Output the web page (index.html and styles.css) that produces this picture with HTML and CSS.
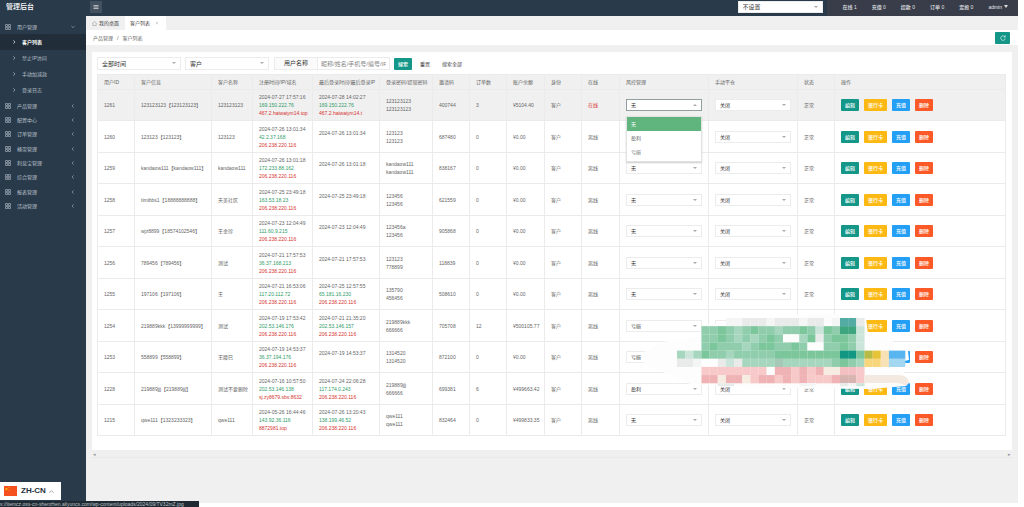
FILE: index.html
```
<!DOCTYPE html>
<html lang="zh-CN">
<head>
<meta charset="utf-8">
<title>管理后台</title>
<link rel="stylesheet" href="styles.css">
</head>
<body>
<svg class="defs" aria-hidden="true">
  <symbol id="grid" viewBox="0 0 12 12"><path d="M1 1h4v4H1zM7 1h4v4H7zM1 7h4v4H1zM7 7h4v4H7z" fill="none" stroke="currentColor" stroke-width="1.2"/></symbol>
  <symbol id="left" viewBox="0 0 12 12"><path d="M8 1 3 6l5 5" fill="none" stroke="currentColor" stroke-width="1.6"/></symbol>
  <symbol id="right" viewBox="0 0 12 12"><path d="m4 1 5 5-5 5" fill="none" stroke="currentColor" stroke-width="2"/></symbol>
  <symbol id="down" viewBox="0 0 12 12"><path d="m1 3 5 5 5-5" fill="none" stroke="currentColor" stroke-width="1.6"/></symbol>
  <symbol id="up" viewBox="0 0 12 12"><path d="m1 9 5-5 5 5" fill="none" stroke="currentColor" stroke-width="1.8"/></symbol>
</svg>
<div class="app">
  <aside class="side">
    <h1 class="brand">管理后台</h1>
    <nav>
      <a class="item first" href="#"><svg class="ico"><use href="#grid"/></svg><span>用户管理</span><svg class="arrow"><use href="#down"/></svg></a>
      <a class="sub active" href="#"><svg class="chev"><use href="#right"/></svg>客户列表</a>
      <a class="sub" href="#"><svg class="chev"><use href="#right"/></svg>禁止IP访问</a>
      <a class="sub" href="#"><svg class="chev"><use href="#right"/></svg>手动加减款</a>
      <a class="sub" href="#"><svg class="chev"><use href="#right"/></svg>登录日志</a>
      <a class="item" href="#"><svg class="ico"><use href="#grid"/></svg><span>产品管理</span><svg class="arrow"><use href="#left"/></svg></a>
      <a class="item" href="#"><svg class="ico"><use href="#grid"/></svg><span>配置中心</span><svg class="arrow"><use href="#left"/></svg></a>
      <a class="item" href="#"><svg class="ico"><use href="#grid"/></svg><span>订单管理</span><svg class="arrow"><use href="#left"/></svg></a>
      <a class="item" href="#"><svg class="ico"><use href="#grid"/></svg><span>桶带管理</span><svg class="arrow"><use href="#left"/></svg></a>
      <a class="item" href="#"><svg class="ico"><use href="#grid"/></svg><span>利息宝管理</span><svg class="arrow"><use href="#left"/></svg></a>
      <a class="item" href="#"><svg class="ico"><use href="#grid"/></svg><span>综合管理</span><svg class="arrow"><use href="#left"/></svg></a>
      <a class="item" href="#"><svg class="ico"><use href="#grid"/></svg><span>报表管理</span><svg class="arrow"><use href="#left"/></svg></a>
      <a class="item" href="#"><svg class="ico"><use href="#grid"/></svg><span>活动管理</span><svg class="arrow"><use href="#left"/></svg></a>
    </nav>
  </aside>
  <div class="main">
    <header class="top">
      <button class="fold" aria-label="收起菜单"><svg viewBox="0 0 12 12"><path d="M1 3h10M1 6h10M1 9h10" fill="none" stroke="currentColor" stroke-width="1.4"/></svg></button>
      <span class="pick head-pick"><select aria-label="提示设置"><option>不设置</option></select></span>
      <nav class="stats">
        <a href="#">在线 1</a><a href="#">充值 0</a><a href="#">提款 0</a><a href="#">订单 0</a><a href="#">定投 0</a><a class="user" href="#">admin</a>
      </nav>
    </header>
    <div class="tabs">
      <a class="tab" href="#"><svg viewBox="0 0 12 12"><path d="M1 6 6 1l5 5M2 5v6h8V5" fill="none" stroke="currentColor"/></svg>我的桌面</a>
      <a class="tab on" href="#">客户列表<svg class="x" viewBox="0 0 12 12"><path d="m2 2 8 8m0-8-8 8" fill="none" stroke="currentColor" stroke-width="1.4"/></svg></a>
    </div>
    <div class="crumbs">
      <span>产品管理</span><span>/</span><span>客户列表</span>
      <button class="reload" aria-label="刷新"><svg viewBox="0 0 12 12"><path d="M10 4A4.500 4.500 0 1 0 10.500 7M10.500 1v3.200H7.500" fill="none" stroke="currentColor" stroke-width="1.200"/></svg></button>
    </div>
    <section class="card">
      <form class="filter">
        <span class="pick wide"><select aria-label="时间"><option>全部时间</option></select></span>
        <span class="pick wide"><select aria-label="身份"><option>客户</option></select></span>
        <span class="field"><label for="name">用户名称</label><input id="name" placeholder="昵称/姓名/手机号/编号/IP"></span>
        <button class="btn teal" type="button">搜索</button>
        <button class="plain" type="button">重置</button>
        <button class="plain" type="button">搜索全部</button>
      </form>
      <div class="table-wrap">
        <table>
          <colgroup><col class="w37"><col class="w77"><col class="w41"><col class="w60"><col class="w67"><col class="w53"><col class="w37"><col class="w37"><col class="w38"><col class="w37"><col class="w38"><col class="w89"><col class="w89"><col class="w37"><col></colgroup>
          <thead><tr><th>用户ID</th><th>客户信息</th><th>客户名称</th><th>注册时间/IP/域名</th><th>最后登录时间/最后登录IP</th><th>登录密码/提现密码</th><th>邀请码</th><th>订单数</th><th>账户余额</th><th>身份</th><th>在线</th><th>风控管理</th><th>手动平仓</th><th>状态</th><th>操作</th></tr></thead>
          <tbody id="rows"></tbody>
        </table>
        <svg class="mosaic" viewBox="640 314 275 80" aria-hidden="true">
          <path d="M644 352 662 342 700 337 703 325 760 318 800 315 842 314 866 317 868 334 893 338 893 350 908 351 909 360 890 364 904 372 909 380 906 386 870 389 760 388 690 384 668 374 644 364Z" fill="#fdfdfd"/>
          <g id="cells"></g>
          <path d="M864 375h34q10 0 11 8l-3 3q-8-4-14-3h-28z" fill="#f3e9e1"/>
        </svg>
      </div>
    </section>
    <div class="scroll"><span>◂</span><span>▸</span></div>
  </div>
</div>
<button class="lang"><svg class="flag" viewBox="0 0 26 20"><path d="M0 0h26v20H0z" fill="#f4511e"/><path d="m5 3 1 2h2L6.500 6.500 7 9 5 7.500 3 9l.5-2.500L2 5h2z" fill="#ffc107"/><circle cx="10" cy="3" r="1" fill="#ffc107"/><circle cx="10" cy="8" r="1" fill="#ffc107"/></svg>ZH-CN<svg class="tri"><use href="#up"/></svg></button>
<div class="status">s://itemcz.oss-cn-shenzhen.aliyuncs.com/wp-content/uploads/2024/09/TV32mZ.jpg</div>
<script src="app.js"></script>
</body>
</html>
```
FILE: styles.css
```
* { box-sizing: border-box; }
body {
  margin: 0;
  padding: 0 6px 4px 0;
  min-height: 100vh;
  display: flex;
  background: #fff;
  color: #666;
  font: 5px/8px "Liberation Sans", "Noto Sans CJK SC", sans-serif;
}
a { color: inherit; text-decoration: none; }
button, input, select { font: inherit; color: inherit; margin: 0; border: 0; padding: 0; border-radius: 0; background: none; }
svg { display: block; }
.defs { position: absolute; width: 0; height: 0; }
.app { flex: 1; display: flex; background: #f0f0f0; }

.side { width: 86px; flex: none; background: #293a4b; color: #b9c1c9; }
.brand { margin: 0; padding: 0 6px; height: 19px; font-size: 7px; line-height: 13px; font-weight: 500; color: #fff; }
.item, .sub { display: flex; align-items: center; }
.item { height: 14px; padding: 0 11px 0 5px; gap: 6px; }
.item.first { height: 15px; }
.item:nth-child(3n) { height: 15px; }
.item span { flex: 1; }
.ico { width: 6px; height: 6px; }
.arrow { width: 4px; height: 4px; }
.sub { height: 16px; padding-left: 12px; gap: 6px; }
.chev { width: 4px; height: 4px; }
.sub.active { background: #212d38; color: #fff; font-weight: 700; }

.main { flex: 1; min-width: 0; }
.top { height: 16px; display: flex; align-items: center; background: #293a4b; color: #e4e6ea; }
.fold { width: 12px; height: 12px; margin: 0 auto 2px 4px; background: #42505f; display: flex; align-items: center; justify-content: center; }
.fold svg { width: 6px; height: 6px; }
.stats { height: 16px; display: flex; align-items: center; gap: 15px; margin-left: 4px; padding: 0 10px 3px 16px; background: #393d49; font-weight: 500; }
.user { display: flex; align-items: center; gap: 2px; }
.user::after { content: ""; border: 2px solid transparent; border-top: 3px solid #ddd; border-bottom: 0; }

.pick { position: relative; display: block; height: 12px; background: #fff; border: 1px solid #ececec; color: #333; }
.pick select { width: 100%; height: 100%; padding: 0 4px; appearance: none; outline: 0; display: block; }
.pick::after { content: ""; position: absolute; right: 4px; top: 4px; border: 2px solid transparent; border-top-color: #aaa; border-bottom: 0; pointer-events: none; }
.pick.open { border-color: #8fa09d; }
.pick.open::after { border: 2px solid transparent; border-bottom-color: #aaa; border-top: 0; }
.head-pick { width: 85px; margin-bottom: 2px; font-size: 6px; }
.wide { width: 84px; height: 13px; font-size: 6px; }

.tabs { height: 14px; display: flex; background: #f0f0f0; color: #444; }
.tab { display: flex; align-items: center; gap: 2px; padding: 0 6px; }
.tab svg { width: 5px; height: 5px; color: #777; }
.tab.on { background: #fff; gap: 5px; padding: 0 7px 0 5px; }
.tab.on .x { width: 4px; height: 4px; color: #aaa; }
.crumbs { height: 15px; display: flex; align-items: center; gap: 4px; padding: 0 8px 0 7px; background: #fff; }
.reload { margin-left: auto; width: 15px; height: 12px; background: #149688; color: #fff; display: flex; align-items: center; justify-content: center; border-radius: 1px; }
.reload svg { width: 6px; height: 6px; }

.card { margin: 7px 6px 0; padding: 5px 6px 14px 5px; background: #fff; }
.filter { display: flex; align-items: center; gap: 4px; height: 13px; margin-bottom: 4px; }
.field { display: flex; height: 13px; margin-left: 1px; border: 1px solid #ececec; font-size: 6px; color: #333; }
.field label { width: 43px; line-height: 11px; text-align: center; background: #fbfbfb; border-right: 1px solid #ececec; }
.field input { width: 71px; padding: 0 3px; outline: 0; }
.field input::placeholder { color: #888; font-size: 6px; }
.btn { height: 12px; padding: 0 4px; color: #fff; font-weight: 500; border-radius: 1px; white-space: nowrap; }
.teal { background: #149688; }
.amber { background: #fdb913; }
.blue { background: #249ff6; }
.orange { background: #fb5a28; }
.filter .btn { padding: 0 4px; }
.plain { padding: 0 4px; color: #444; }

.table-wrap { position: relative; }
table { width: 100%; table-layout: fixed; border-collapse: collapse; }
.w37 { width: 37px; } .w38 { width: 38px; } .w41 { width: 41px; } .w53 { width: 53px; } .w60 { width: 60px; }
.w67 { width: 67px; } .w77 { width: 77px; } .w89 { width: 89px; }
th, td { padding: 0 6px; border: 1px solid #ebebeb; text-align: left; font-weight: 400; white-space: nowrap; vertical-align: middle; }
th { height: 15px; background: #f0f0f0; }
td { height: 31px; }
tr:nth-child(even) td { height: 32px; }
.hover td { background: #f0f0f0; }
.ip { color: #2f9c68; }
.dom, .live { color: #d6342f; }
.times > div { min-height: 8px; }
.actions { display: flex; gap: 5px; }
.menu { position: absolute; z-index: 2; top: 16px; left: -1px; right: -1px; margin: 0; padding: 0 0 2px; list-style: none; background: #fff; border: 1px solid #e2e2e2; box-shadow: 0 1px 2px #0002; color: #666; }
.menu li { height: 14px; padding: 0 4px; line-height: 14px; }
.menu .sel { background: #5fb57d; color: #fff; }
.mosaic { position: absolute; left: 543px; top: 240px; width: 275px; height: 80px; }
.scroll { display: flex; justify-content: space-between; height: 8px; margin: 0 6px; padding: 0 1px; border-bottom: 1px solid #e9e9e9; color: #999; }

.lang { position: fixed; left: 0; bottom: 7px; height: 18px; width: 61px; padding-left: 4px; display: flex; align-items: center; gap: 4px; background: #fff; color: #26303a; font: 700 8px/18px "Liberation Sans", sans-serif; }
.flag { width: 13px; height: 10px; }
.tri { width: 5px; height: 5px; margin-left: -1px; color: #888; }
.status { position: fixed; left: 0; bottom: 0; width: 199px; height: 6px; background: #202a33; color: #b8c0c6; white-space: nowrap; line-height: 6px; }
```
FILE: app.js
```
const customers = [
  ["1261", "123123123【123123123】", "123123123", "2024-07-27 17:57:16|169.150.222.76|467.2.haiwaiym14.top", "2024-07-28 14:02:27|169.150.222.76|467.2.haiwaiym14.t", "123123123|123123123", "400744", "3", "¥5104.40", "无"],
  ["1260", "123123【123123】", "123123", "2024-07-26 13:01:34|42.2.37.168|206.238.220.116", "2024-07-26 13:01:34|", "123123|123123", "687480", "0", "¥0.00", "无"],
  ["1259", "kandaow111【kandaow111】", "kandaow111", "2024-07-26 13:01:18|172.233.88.162|206.238.220.116", "2024-07-26 13:01:18|", "kandaow111|kandaow111", "838167", "0", "¥0.00", "无"],
  ["1258", "timibbs1【18888888888】", "天美社区", "2024-07-25 23:49:18|163.53.18.23|206.238.220.116", "2024-07-25 23:49:18|", "123456|123456", "621559", "0", "¥0.00", "无"],
  ["1257", "wjz8899【18574102546】", "王金珍", "2024-07-23 12:04:49|111.60.9.215|206.238.220.116", "2024-07-23 12:04:49|", "123456a|123456", "905868", "0", "¥0.00", "无"],
  ["1256", "789456【789456】", "测试", "2024-07-21 17:57:53|36.37.168.213|206.238.220.116", "2024-07-21 17:57:53|", "123123|778899", "118839", "0", "¥0.00", "无"],
  ["1255", "197106【197106】", "王", "2024-07-21 16:53:06|117.20.112.72|206.238.220.116", "2024-07-25 12:57:55|65.181.16.230|206.238.220.116", "135790|456456", "508610", "0", "¥0.00", "无"],
  ["1254", "219889kkk【13999999999】", "测试", "2024-07-19 17:53:42|202.53.146.176|206.238.220.116", "2024-07-21 21:35:20|202.53.146.157|206.238.220.116", "219889kkk|666666", "705708", "12", "¥500105.77", "亏损"],
  ["1253", "558899【558899】", "王腰巳", "2024-07-19 14:53:37|36.37.194.176|206.238.220.116", "2024-07-19 14:53:37|", "1314520|1314520", "872100", "0", "¥0.00", "亏损"],
  ["1228", "219889jjj【219889jjj】", "测试不要删除", "2024-07-16 10:57:50|202.53.146.138|sj.zy8679.sbs:8632", "2024-07-24 22:06:28|117.174.0.243|206.238.220.116", "219889jjj|666666", "699381", "6", "¥499663.42", "盈利"],
  ["1215", "qwe111【1323233323】", "qwe111", "2024-05-26 16:44:46|143.92.36.116|8872981.top", "2024-07-26 13:20:43|138.199.46.52|206.238.220.116", "qwe111|qwe111", "832464", "0", "¥499833.35", "无"]
];

const lines = text => text.split("|").map((t, i) => `<div class="${["", "ip", "dom"][i]}">${t}</div>`).join("");
const stack = text => text.split("|").map(t => `<div>${t}</div>`).join("");
const pick = (label, value, extra = "", menu = "") =>
  `<span class="pick ${extra}"><select aria-label="${label}"><option>${value}</option></select>${menu}</span>`;
const menu = '<ul class="menu" role="listbox"><li class="sel" role="option">无</li><li role="option">盈利</li><li role="option">亏损</li></ul>';

document.getElementById("rows").innerHTML = customers.map((c, i) => `
<tr class="${i ? "" : "hover"}"><td>${c[0]}</td><td>${c[1]}</td><td>${c[2]}</td>
<td class="times">${lines(c[3])}</td><td class="times">${lines(c[4])}</td><td>${stack(c[5])}</td>
<td>${c[6]}</td><td>${c[7]}</td><td>${c[8]}</td><td>客户</td><td class="${i ? "" : "live"}">${i ? "离线" : "在线"}</td>
<td>${pick("风控管理", c[9], i ? "" : "open", i ? "" : menu)}</td><td>${pick("手动平仓", "关闭")}</td><td>正常</td>
<td><div class="actions"><button class="btn teal">编辑</button><button class="btn amber">银行卡</button><button class="btn blue">充值</button><button class="btn orange">删除</button></div></td></tr>`).join("");

const palette = {
  a: "#8fcdac", b: "#7cc69c", c: "#a6d6bd", d: "#cce5da", g: "#e9ebeb", h: "#f4f5f5", w: "#fdfdfd", s: "#a5c8b7",
  t: "#53aba3", u: "#3da680", v: "#129783", p: "#f8c9c9", q: "#f0b3b5", r: "#f7ece2", k: "#f3bfc0", m: "#d8b4b1",
  y: "#f8d67c", Y: "#f8e2b5", z: "#e6c337", o: "#b5bb45", B: "#58b5ef", l: "#a3d6f0"
};
const blocks = [
  "......hhggghggghgg.httg.....",
  "...aabacabaacaabadbauud.....",
  "...aabacacabawwcbgabbad.....",
  "...abaaacabbaabawwaabad.....",
  "cdcbaacaaaaabbbbbbbbvvbozYBB",
  "gghwwgdgccccsccccccabacyyYll",
  "...ppppppppwqqpqpqrrkkp.....",
  "...qqrqqrpqqpqpqpppqmmp.....",
  ".....gg........hh...ghd....."
];
const size = 8.15;
document.getElementById("cells").innerHTML = blocks.map((row, y) => [...row].map((ch, x) =>
  palette[ch] ? `<rect x="${677 + x * size}" y="${318 + y * size}" width="${size + 0.1}" height="${y === 8 ? 3 : size + 0.1}" fill="${palette[ch]}"/>` : "").join("")).join("");
```
